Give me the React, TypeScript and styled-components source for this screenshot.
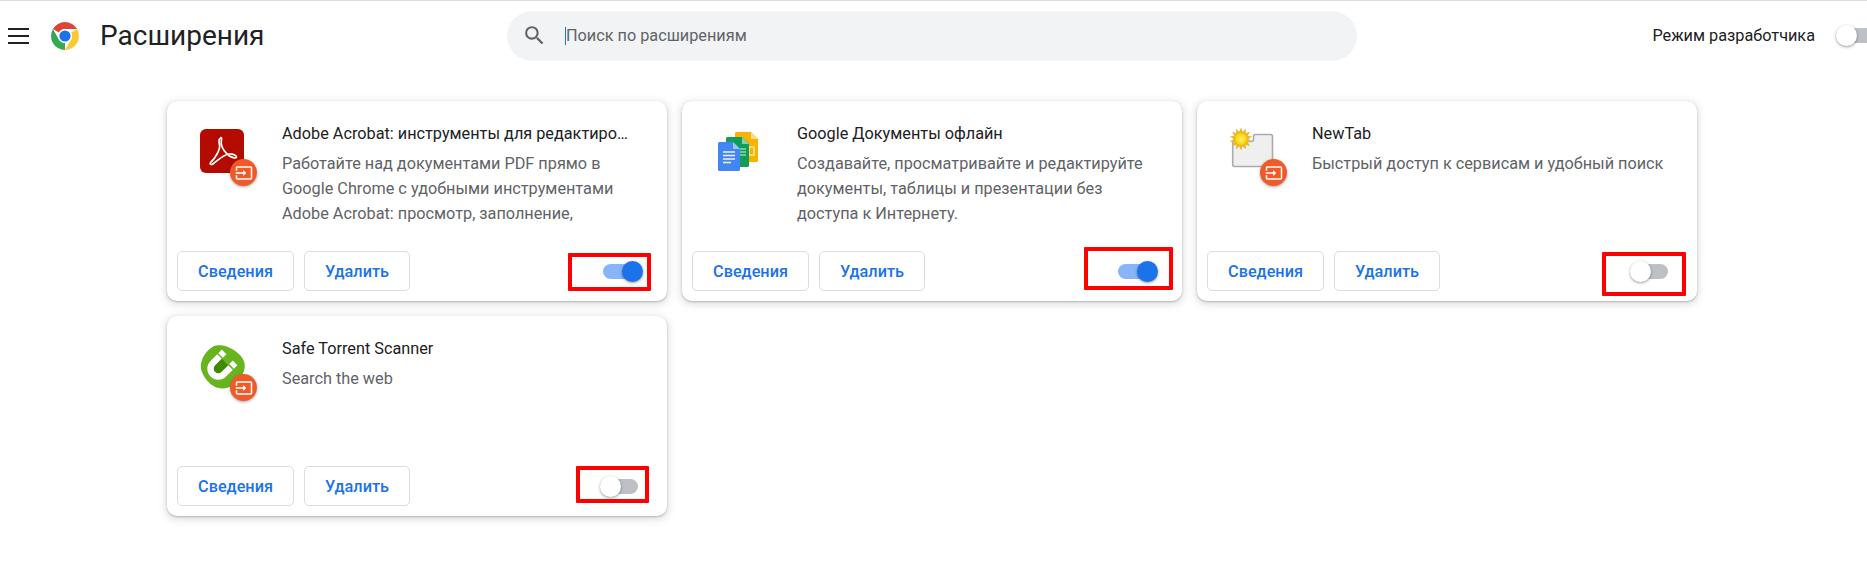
import React from "react";
import styled, { createGlobalStyle } from "styled-components";

const Global = createGlobalStyle`
  html, body { margin: 0; padding: 0; background: #fff; overflow: hidden; height: 100%; }
  body { font-family: Roboto, "Noto Sans", sans-serif; color: #202124; }
  * { box-sizing: border-box; }
`;

const Page = styled.div`
  width: 1867px;
  height: 583px;
  overflow: hidden;
  background: #fff;
`;

const Header = styled.header`
  display: grid;
  grid-template-columns: 507px 850px 1fr;
  align-items: center;
  height: 72px;
  border-top: 1px solid #dcdee0;
  padding-bottom: 2px;
`;

const Brand = styled.div`
  display: flex;
  align-items: center;
  padding-left: 8px;
`;

const Burger = styled.div`
  width: 21px;
  height: 16px;
  display: flex;
  flex-direction: column;
  justify-content: space-between;
  margin-right: 22px;
  span { display: block; height: 2px; background: #202124; }
`;

const Logo = styled.svg`
  width: 28px;
  height: 28px;
  margin-right: 21px;
  flex: none;
`;

const Title = styled.h1`
  margin: 0;
  font-size: 28px;
  line-height: 36px;
  font-weight: 400;
  color: #202124;
`;

const Search = styled.div`
  display: flex;
  align-items: center;
  height: 50px;
  border-radius: 25px;
  background: #f1f3f4;
  padding-left: 15px;
`;

const SearchIcon = styled.svg`
  width: 25px;
  height: 25px;
  fill: #5f6368;
  margin-right: 18px;
  flex: none;
`;

const Caret = styled.span`
  width: 1px;
  height: 18px;
  background: #1a73e8;
`;

const Placeholder = styled.span`
  font-size: 16.25px;
  color: #5f6368;
`;

const DevMode = styled.div`
  display: flex;
  align-items: center;
  justify-content: flex-end;
  gap: 24px;
  margin-right: -8px;
  font-size: 16.25px;
  color: #202124;
`;

const Grid = styled.main`
  display: grid;
  grid-template-columns: repeat(3, 500px);
  grid-auto-rows: 200px;
  gap: 15px;
  margin: 29px 0 0 167px;
`;

const Card = styled.article`
  position: relative;
  display: flex;
  flex-direction: column;
  background: #fff;
  border-radius: 10px;
  box-shadow: 0 1px 2px rgba(60, 64, 67, 0.3), 0 2px 7px 2px rgba(60, 64, 67, 0.15);
`;

const CardMain = styled.div`
  flex: 1;
  display: flex;
  min-height: 0;
  padding: 20px 30px 0 30px;
`;

const IconBox = styled.div`
  position: relative;
  width: 60px;
  height: 60px;
  flex: none;
  margin-right: 25px;
`;

const IconArt = styled.svg`
  display: block;
  width: 60px;
  height: 60px;
`;

const Badge = styled.div`
  position: absolute;
  left: 33px;
  top: 38px;
  width: 27px;
  height: 27px;
  border-radius: 50%;
  background: #f05a28;
  box-shadow: 0 1px 3px rgba(60, 64, 67, 0.45);
  display: flex;
  align-items: center;
  justify-content: center;
  svg { width: 18px; height: 18px; fill: #fff; display: block; }
`;

const Info = styled.div`
  min-width: 0;
  flex: 1;
`;

const Name = styled.div`
  font-size: 16.25px;
  line-height: 25px;
  color: #202124;
  margin-bottom: 5px;
  white-space: nowrap;
  overflow: hidden;
  text-overflow: ellipsis;
`;

const Description = styled.div`
  font-size: 16.25px;
  line-height: 25px;
  color: #5f6368;
`;

const Footer = styled.div`
  display: flex;
  align-items: center;
  padding: 0 28px 10px 10px;
`;

const Action = styled.button<{ $w: number }>`
  height: 40px;
  width: ${(p) => p.$w}px;
  margin-right: 10px;
  padding: 0;
  background: #fff;
  border: 1px solid #dadce0;
  border-radius: 5px;
  color: #1a73e8;
  font: 500 16.25px Roboto, sans-serif;
`;

const Spacer = styled.div`
  flex: 1;
`;

const Track = styled.div<{ $on: boolean }>`
  position: relative;
  width: ${(p) => (p.$on ? "36px" : "35px")};
  margin-right: ${(p) => (p.$on ? "0" : "1px")};
  height: 15px;
  flex: none;
  border-radius: 8px;
  background: ${(p) => (p.$on ? "#8ab4f8" : "#bdc1c6")};
`;

const Knob = styled.div<{ $on: boolean }>`
  position: absolute;
  top: -3px;
  left: ${(p) => (p.$on ? "19px" : "-3px")};
  width: 21px;
  height: 21px;
  border-radius: 50%;
  background: ${(p) => (p.$on ? "#1a73e8" : "#fff")};
  box-shadow: 0 1px 3px rgba(0, 0, 0, 0.4);
`;

const Highlight = styled.div<{ $x: number; $y: number; $w: number; $h: number }>`
  position: absolute;
  left: ${(p) => p.$x}px;
  top: ${(p) => p.$y}px;
  width: ${(p) => p.$w}px;
  height: ${(p) => p.$h}px;
  border: 4px solid #ff0000;
  border-radius: 1px;
  pointer-events: none;
`;

const Toggle = ({ on }: { on: boolean }) => (
  <Track $on={on}>
    <Knob $on={on} />
  </Track>
);

const ChromeLogo = () => (
  <Logo viewBox="4 4 40 40">
    <path fill="#db4437" d="M6.68 14A20 20 0 0 1 41.32 14H24a10 10 0 0 0-8.66 5z" />
    <path fill="#fcc934" d="M41.32 14A20 20 0 0 1 24 44L32.66 29a10 10 0 0 0 0-10z" />
    <path fill="#34a853" d="M24 44A20 20 0 0 1 6.68 14L15.34 29a10 10 0 0 0 8.66 5z" />
    <circle cx="24" cy="24" r="10" fill="#fff" />
    <circle cx="24" cy="24" r="8" fill="#1a73e8" />
  </Logo>
);

const AcrobatArt = () => (
  <IconArt viewBox="0 0 60 60">
    <rect x="3" y="8" width="44" height="44" rx="6" fill="#b30b00" />
    <path
      fill="none"
      stroke="#fff"
      strokeWidth="1.7"
      d="M24 17c-2 0-2.500 3-1.500 7 1 4-4 13-8.500 17-2 2 0 3.500 2.500 1.500 4-3 10-9 16-9.500 3-.3 7 1.500 7 3 0 1.500-4 1-7-1-4-3-7-7-8-11-1-4 1-7.500-.5-7.500z"
    />
  </IconArt>
);

const DocsArt = () => (
  <IconArt viewBox="0 0 60 60">
    <path fill="#f4b400" d="M23 12.500a1.500 1.500 0 0 1 1.500-1.500H39l7 7V39.500a1.500 1.500 0 0 1-1.500 1.500H24.500a1.500 1.500 0 0 1-1.500-1.500z" />
    <path fill="#fbdc8c" d="M39 11l7 7h-7z" />
    <rect x="37" y="26" width="5" height="8" fill="none" stroke="#fdf0c8" strokeWidth="1.2" />
    <path fill="#0f9d58" d="M14 17.500a1.500 1.500 0 0 1 1.500-1.500H30l7 7V44.500a1.500 1.500 0 0 1-1.500 1.500H15.500a1.500 1.500 0 0 1-1.500-1.500z" />
    <path fill="#87ceac" d="M30 16l7 7h-7z" />
    <path stroke="#d5efe2" strokeWidth="1" d="M28 28h6M28 31h6M28 34h6" />
    <path fill="#4285f4" d="M6 22.500a1.500 1.500 0 0 1 1.500-1.500H21l7 7V48.500a1.500 1.500 0 0 1-1.500 1.500H7.500a1.500 1.500 0 0 1-1.500-1.500z" />
    <path fill="#a1c2fa" d="M21 21l7 7h-7z" />
    <path stroke="#f1f1f1" strokeWidth="1.500" d="M11 31h12M11 34.500h12M11 38h12M11 41.500h8" />
  </IconArt>
);

const sunSpikes = Array.from({ length: 14 }, (_, i) => (i * 360) / 14);

const NewTabArt = () => (
  <IconArt viewBox="0 0 60 60">
    <defs>
      <radialGradient id="sun">
        <stop offset="0" stopColor="#fff27a" />
        <stop offset="0.7" stopColor="#fbd90f" />
        <stop offset="1" stopColor="#f2b200" />
      </radialGradient>
    </defs>
    <path
      fill="#efefef"
      stroke="#ababab"
      strokeWidth="1.600"
      d="M5.700 20.500H24.500a2 2 0 0 0 2-2V15.500a2 2 0 0 1 2-2H43.500a2 2 0 0 1 2 2V43.500a2 2 0 0 1-2 2H7.700a2 2 0 0 1-2-2z"
    />
    {sunSpikes.map((a) => (
      <path key={a} d="M14 6.500l2.400 6h-4.800z" fill="#e8b73a" transform={`rotate(${a} 14 18)`} />
    ))}
    <circle cx="14" cy="18" r="7" fill="url(#sun)" />
  </IconArt>
);

const TorrentArt = () => (
  <IconArt viewBox="0 0 60 60">
    <path
      fill="#68b41f"
      d="M19 9.500c6-1 11 .5 16 3.500 6 3.500 11 8 12.500 14 1.200 6-1.500 12-6 17-4 5-10 9-17 8.500-7-.6-12-4.500-16-10-3.500-5-6-11-4-17 2-7 8-14.500 14.500-16z"
    />
    <g transform="translate(30.5 23.5) rotate(45)">
      <path fill="#fff" d="M-11 3.500H-4.500V13a4.500 4.500 0 0 0 9 0V3.500H11V13a11 11 0 0 1-22 0z" />
      <path fill="#3f8a00" d="M-4.500 3.500H4.500V13a4.500 4.500 0 0 1-9 0z" />
      <rect x="-11" y="-3" width="6.500" height="5" fill="#fff" />
      <rect x="4.500" y="-3" width="6.500" height="5" fill="#fff" />
    </g>
  </IconArt>
);

const InputGlyph = () => (
  <svg viewBox="0 0 24 24">
    <path d="M21 3.010H3c-1.100 0-2 .9-2 2V9h2V4.990h18v14.030H3V15H1v4.010c0 1.100.9 1.980 2 1.980h18c1.100 0 2-.88 2-1.980v-14c0-1.110-.9-2-2-2zM11 16l4-4-4-4v3H1v2h10v3z" />
  </svg>
);

type Ext = {
  name: string;
  desc: string;
  on: boolean;
  art: React.ReactNode;
  badge: boolean;
  box: { x: number; y: number; w: number; h: number };
};

const extensions: Ext[] = [
  {
    name: "Adobe Acrobat: инструменты для редактирования",
    desc: "Работайте над документами PDF прямо в Google Chrome с удобными инструментами Adobe Acrobat: просмотр, заполнение,",
    on: true,
    art: <AcrobatArt />,
    badge: true,
    box: { x: 401, y: 152, w: 83, h: 38 },
  },
  {
    name: "Google Документы офлайн",
    desc: "Создавайте, просматривайте и редактируйте документы, таблицы и презентации без доступа к Интернету.",
    on: true,
    art: <DocsArt />,
    badge: false,
    box: { x: 402, y: 146, w: 89, h: 43 },
  },
  {
    name: "NewTab",
    desc: "Быстрый доступ к сервисам и удобный поиск",
    on: false,
    art: <NewTabArt />,
    badge: true,
    box: { x: 405, y: 151, w: 84, h: 44 },
  },
  {
    name: "Safe Torrent Scanner",
    desc: "Search the web",
    on: false,
    art: <TorrentArt />,
    badge: true,
    box: { x: 409, y: 150, w: 73, h: 37 },
  },
];

export default function App() {
  return (
    <Page>
      <Global />
      <Header>
        <Brand>
          <Burger>
            <span />
            <span />
            <span />
          </Burger>
          <ChromeLogo />
          <Title>Расширения</Title>
        </Brand>
        <Search>
          <SearchIcon viewBox="0 0 24 24">
            <path d="M15.500 14h-.79l-.28-.27A6.471 6.471 0 0 0 16 9.500 6.500 6.500 0 1 0 9.500 16c1.610 0 3.090-.59 4.230-1.570l.27.28v.79l5 4.990L20.490 19l-4.990-5zm-6 0C7.010 14 5 11.990 5 9.500S7.010 5 9.500 5 14 7.010 14 9.500 11.990 14 9.500 14z" />
          </SearchIcon>
          <Caret />
          <Placeholder>Поиск по расширениям</Placeholder>
        </Search>
        <DevMode>
          <span>Режим разработчика</span>
          <Toggle on={false} />
        </DevMode>
      </Header>
      <Grid>
        {extensions.map((e) => (
          <Card key={e.name}>
            <CardMain>
              <IconBox>
                {e.art}
                {e.badge && (
                  <Badge>
                    <InputGlyph />
                  </Badge>
                )}
              </IconBox>
              <Info>
                <Name>{e.name}</Name>
                <Description>{e.desc}</Description>
              </Info>
            </CardMain>
            <Footer>
              <Action $w={117}>Сведения</Action>
              <Action $w={106}>Удалить</Action>
              <Spacer />
              <Toggle on={e.on} />
            </Footer>
            <Highlight $x={e.box.x} $y={e.box.y} $w={e.box.w} $h={e.box.h} />
          </Card>
        ))}
      </Grid>
    </Page>
  );
}
